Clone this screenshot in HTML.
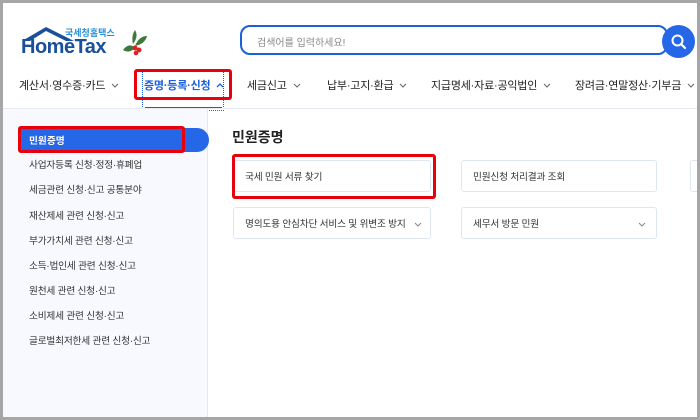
<!DOCTYPE html>
<html><head><meta charset="utf-8"><style>
*{margin:0;padding:0;box-sizing:border-box}
body{width:700px;height:420px;overflow:hidden;background:#a6a6a6;font-family:"Liberation Sans","Noto Sans CJK KR",sans-serif;color:#222}
#f{position:absolute;left:3px;top:3px;width:694px;height:414px;background:#fff;overflow:hidden}
.abs{position:absolute}
.nav{position:absolute;top:74px;font-size:11px;color:#222;white-space:nowrap;letter-spacing:-0.2px}
.nav svg{margin-left:6px;vertical-align:1px}
.side{position:absolute;left:0;top:106px;width:205px;height:310px;background:#f7f9fe;border-right:1px solid #e3e8f2}
.si{position:absolute;left:26px;font-size:9.7px;color:#333;letter-spacing:-0.2px}
.card{position:absolute;height:32px;border:1px solid #dfe6f3;border-radius:3px;font-size:9.7px;color:#333;padding:8px 0 0 11px;background:#fff;letter-spacing:-0.2px;white-space:nowrap}
.red{position:absolute;border:3px solid #e8000b;border-radius:3px}
</style></head><body><div id="f">
<svg class="abs" style="left:17px;top:22px" width="60" height="18" viewBox="0 0 60 18"><path d="M2 16 L26 2 L54 16 L46 16 L26 6 L10 16Z" fill="#1a4f9c"/></svg>
<div class="abs" style="left:62px;top:23px;font-size:9px;color:#2a8fd8;font-weight:bold">국세청홈택스</div>
<div class="abs" style="left:18px;top:33px;font-size:20px;font-weight:bold;color:#1a4f9c;letter-spacing:-0.5px">HomeTax</div>
<svg class="abs" style="left:112px;top:25px" width="36" height="35"><path d="M8 22 q6-8 12-2 q-6 6-12 2z M20 18 q4-10 12-10 q-2 8-12 10z M18 16 q-2-8 2-14 q4 6-2 14z" fill="#3d7a3a"/><circle cx="20" cy="20" r="2.5" fill="#d22"/><circle cx="24" cy="22" r="2.5" fill="#d22"/><circle cx="21" cy="25" r="2.3" fill="#d22"/></svg>
<div class="abs" style="left:237px;top:22px;width:428px;height:30px;border:2px solid #1a5fdc;border-radius:10px"></div>
<div class="abs" style="left:254px;top:31px;font-size:10px;color:#888">검색어를 입력하세요!</div>
<div class="abs" style="left:659px;top:22px;width:33px;height:33px;border-radius:50%;background:#2567e6"></div>
<svg class="abs" style="left:667px;top:30px" width="18" height="18"><circle cx="7.5" cy="7.5" r="5" fill="none" stroke="#fff" stroke-width="2"/><path d="M11 11 L15 15" stroke="#fff" stroke-width="2.2" stroke-linecap="round"/></svg>
<div class="nav" style="left:16px">계산서·영수증·카드<svg width="8" height="5"><path d="M1 1 L4 4 L7 1" fill="none" stroke="#666" stroke-width="1"/></svg></div>
<div class="nav" style="left:141px;color:#1a5fdc;font-weight:bold">증명·등록·신청<svg width="8" height="5"><path d="M1 4 L4 1 L7 4" fill="none" stroke="#1a5fdc" stroke-width="1.3"/></svg></div>
<div class="abs" style="left:139px;top:68px;width:82px;height:40px;border:1px dotted #1a5fdc"></div>
<div class="abs" style="left:142px;top:104px;width:77px;height:2px;background:#1a5fdc"></div>
<div class="red" style="left:131px;top:66px;width:98px;height:31px"></div>
<div class="nav" style="left:244px">세금신고<svg width="8" height="5"><path d="M1 1 L4 4 L7 1" fill="none" stroke="#666" stroke-width="1"/></svg></div>
<div class="nav" style="left:324px">납부·고지·환급<svg width="8" height="5"><path d="M1 1 L4 4 L7 1" fill="none" stroke="#666" stroke-width="1"/></svg></div>
<div class="nav" style="left:428px">지급명세·자료·공익법인<svg width="8" height="5"><path d="M1 1 L4 4 L7 1" fill="none" stroke="#666" stroke-width="1"/></svg></div>
<div class="nav" style="left:572px">장려금·연말정산·기부금<svg width="8" height="5"><path d="M1 1 L4 4 L7 1" fill="none" stroke="#666" stroke-width="1"/></svg></div>
<div class="abs" style="left:0;top:105px;width:694px;height:1px;background:#e6e9ef"></div>
<div class="side">
<div class="abs" style="left:16px;top:19px;width:190px;height:24px;background:#2567e6;border-radius:0 12px 12px 0"></div>
<div class="abs" style="left:26px;top:24px;font-size:9.7px;color:#fff;font-weight:bold">민원증명</div>
<div class="red" style="left:15px;top:17px;width:167px;height:27px"></div>
<div class="si" style="top:48px">사업자등록 신청·정정·휴폐업</div>
<div class="si" style="top:73px">세금관련 신청·신고 공통분야</div>
<div class="si" style="top:99px">재산제세 관련 신청·신고</div>
<div class="si" style="top:124px">부가가치세 관련 신청·신고</div>
<div class="si" style="top:149px">소득·법인세 관련 신청·신고</div>
<div class="si" style="top:174px">원천세 관련 신청·신고</div>
<div class="si" style="top:199px">소비제세 관련 신청·신고</div>
<div class="si" style="top:224px">글로벌최저한세 관련 신청·신고</div>
</div>
<div class="abs" style="left:229px;top:124px;font-size:14px;font-weight:bold;color:#222">민원증명</div>
<div class="card" style="left:230px;top:157px;width:198px">국세 민원 서류 찾기</div>
<div class="red" style="left:229px;top:151px;width:204px;height:45px"></div>
<div class="card" style="left:458px;top:157px;width:196px">민원신청 처리결과 조회</div>
<div class="card" style="left:687px;top:157px;width:20px"></div>
<div class="card" style="left:230px;top:204px;width:198px">명의도용 안심차단 서비스 및 위변조 방지<svg style="position:absolute;right:8px;top:14px" width="8" height="5"><path d="M1 1 L4 4 L7 1" fill="none" stroke="#888" stroke-width="1"/></svg></div>
<div class="card" style="left:458px;top:204px;width:196px">세무서 방문 민원<svg style="position:absolute;right:10px;top:14px" width="8" height="5"><path d="M1 1 L4 4 L7 1" fill="none" stroke="#888" stroke-width="1"/></svg></div>
</div></body></html>
